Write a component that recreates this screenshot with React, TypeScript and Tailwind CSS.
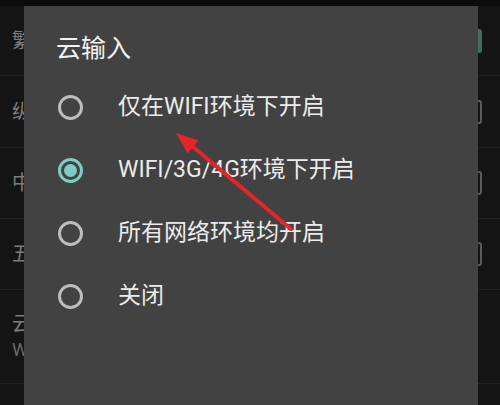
import React from 'react';

const rows = [
  { id: 'fan', label: '繁体', h: 'h-[70px]', checked: true },
  { id: 'zong', label: '纵向', h: 'h-[72px]', checked: false },
  { id: 'zhong', label: '中英', h: 'h-[71px]', checked: false },
  { id: 'wu', label: '五笔', h: 'h-[71px]', checked: false },
];

const options = [
  { id: 'wifi', label: '仅在WIFI环境下开启', selected: false },
  { id: 'mobile', label: 'WIFI/3G/4G环境下开启', selected: true },
  { id: 'all', label: '所有网络环境均开启', selected: false },
  { id: 'off', label: '关闭', selected: false },
];

const App: React.FC = () => {
  return (
    <div
      className="relative w-[500px] h-[405px] overflow-hidden bg-[#141414]"
      style={{ fontFamily: 'Roboto, "Noto Sans CJK SC", sans-serif' }}
    >
      {/* status strip */}
      <div className="h-[6px] bg-[#0b0b0b]" />

      {/* settings list behind the dialog */}
      <div className="flex flex-col">
        {rows.map(row => (
          <div key={row.id} className={`${row.h} flex items-center justify-between pl-3 pr-[18px] border-b border-[#222]`}>
            <span className="text-[20px] text-[#7c7c7c]">{row.label}</span>
            {row.checked ? (
              <div className="w-6 h-6 rounded-[3px] bg-[#3d6e62]" />
            ) : (
              <div className="w-6 h-6 rounded-[3px] border-2 border-[#5a5a5a]" />
            )}
          </div>
        ))}
        <div className="h-[94px] flex items-center justify-between pl-3 pr-[18px] border-b border-[#222]">
          <div className="flex flex-col leading-[26px]">
            <span className="text-[20px] text-[#7c7c7c]">云输入</span>
            <span className="text-[18px] text-[#6a6a6a]">WIFI/3G/4G环境下开启</span>
          </div>
        </div>
      </div>

      {/* dialog */}
      <div className="absolute left-6 top-[6px] w-[454px] h-[420px] bg-[#424242] pt-[27px]">
        <div className="pl-8 text-[25px] leading-[32px] text-[#f2f2f2]">云输入</div>
        <div className="mt-[11px] flex flex-col pl-[34px]">
          {options.map(opt => (
            <div key={opt.id} className="h-[63px] flex items-center">
              {opt.selected ? (
                <div className="w-[25px] h-[25px] rounded-full border-[3px] border-[#80cbc4] flex items-center justify-center">
                  <div className="w-[13px] h-[13px] rounded-full bg-[#80cbc4]" />
                </div>
              ) : (
                <div className="w-[25px] h-[25px] rounded-full border-[3px] border-[#bdbdbd]" />
              )}
              <span className="ml-[35px] text-[23px] text-[#ececec]">{opt.label}</span>
            </div>
          ))}
        </div>
      </div>

      {/* red annotation arrow */}
      <svg className="absolute left-0 top-0 pointer-events-none" width="500" height="405">
        <line x1="291" y1="229" x2="192" y2="146" stroke="#e4262b" strokeWidth="4" strokeLinecap="round" />
        <polygon points="176,133 198.5,140.5 187.5,153.5" fill="#e4262b" />
      </svg>
    </div>
  );
};

export default App;
